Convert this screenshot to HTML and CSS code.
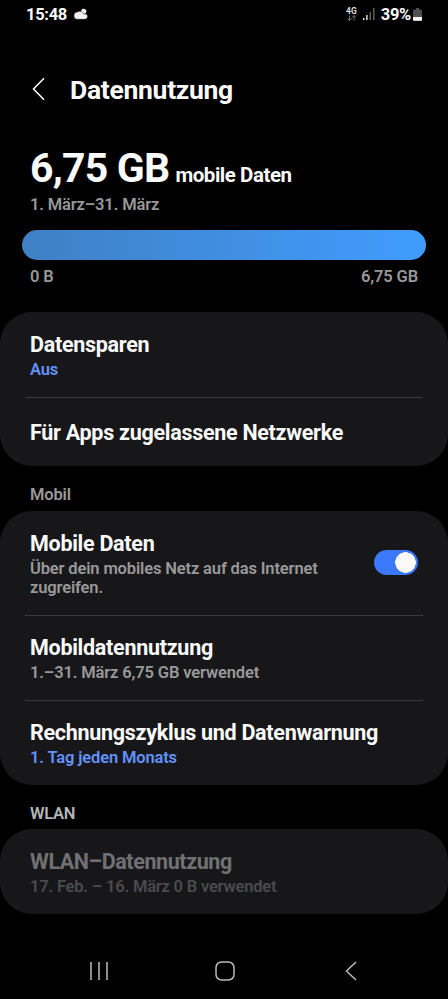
FILE: index.html
```html
<!DOCTYPE html>
<html lang="de">
<head>
<meta charset="utf-8">
<title>Datennutzung</title>
<link rel="stylesheet" href="styles.css">
</head>
<body>
<header class="status">
  <div class="status-left"><span class="t clock">15:48</span>
    <svg class="cloud" viewBox="0 0 14 12"><circle cx="9.700" cy="3.300" r="2.600" fill="#eee"/><path d="M3.700 11.300a3.600 3.600 0 0 1-.3-7.200 4.200 4.200 0 0 1 6.500 2.200 4 4 0 0 0 1.600-.5 2.800 2.800 0 0 1-.5 5.500z" fill="#f2f2f2" stroke="#000" stroke-width=".4"/></svg>
  </div>
  <div class="status-right">
    <svg class="net" viewBox="0 0 12 15"><text x="0" y="7" font-size="8.500" font-weight="700" fill="#ddd">4G</text><path d="M3.500 8.500v5M1.500 11.500l2 2 2-2M8 13.500v-5M6 10.500l2-2 2 2" stroke="#777" fill="none"/></svg>
    <svg class="signal" viewBox="0 0 12 12"><path d="M.7 10v2M3.900 7v5" stroke="#eee" stroke-width="1.400"/><path d="M7.300 4v8M10.800 0v12" stroke="#666" stroke-width="1.400"/></svg>
    <span class="t pct">39%</span>
    <svg class="battery" viewBox="0 0 9 13"><path d="M3 0h3v1.500h1.500A1.500 1.500 0 0 1 9 3v10H0V3a1.500 1.500 0 0 1 1.500-1.500H3z" fill="#505050"/><path d="M0 9h9v2.800a1 1 0 0 1-1 1H1a1 1 0 0 1-1-1z" fill="#f5f5f5"/></svg>
  </div>
</header>
<div class="titlebar">
  <svg class="back" viewBox="0 0 14 24"><path d="M13 1.200L2.500 12 13 22.800" fill="none" stroke="#fff" stroke-width="1.500"/></svg>
  <h1 class="t">Datennutzung</h1>
</div>
<section class="usage">
  <div class="amount"><span class="t big">6,75 GB</span><span class="t kind">mobile Daten</span></div>
  <div class="t period">1. März–31. März</div>
  <div class="bar"></div>
  <div class="scale"><span class="t">0 B</span><span class="t max">6,75 GB</span></div>
</section>
<main>
  <section class="card">
    <div class="row saver"><div class="t label">Datensparen</div><div class="t sub blue">Aus</div></div>
    <div class="row apps"><div class="t label">Für Apps zugelassene Netzwerke</div></div>
  </section>
  <h2>Mobil</h2>
  <section class="card">
    <div class="row mobile"><div><div class="t label">Mobile Daten</div><div class="t sub">Über dein mobiles Netz auf das Internet<br>zugreifen.</div></div><div class="switch"></div></div>
    <div class="row usage-row"><div class="t label">Mobildatennutzung</div><div class="t sub">1.–31. März 6,75 GB verwendet</div></div>
    <div class="row cycle"><div class="t label">Rechnungszyklus und Datenwarnung</div><div class="t sub blue">1. Tag jeden Monats</div></div>
  </section>
  <h2 class="light">WLAN</h2>
  <section class="card">
    <div class="row wlan"><div class="t label">WLAN–Datennutzung</div><div class="t sub">17. Feb. – 16. März 0 B verwendet</div></div>
  </section>
</main>
<nav>
  <svg viewBox="0 0 20 20"><path d="M2 1v18M10 1v18M18 1v18" stroke="#bbb" stroke-width="1.500"/></svg>
  <svg viewBox="0 0 20 20"><rect x="1" y="1" width="18" height="18" rx="5.500" fill="none" stroke="#bbb" stroke-width="1.500"/></svg>
  <svg viewBox="0 0 20 20"><path d="M15 1L5.500 10l9.500 9" fill="none" stroke="#bbb" stroke-width="1.500"/></svg>
</nav>
</body>
</html>
```
FILE: styles.css
```css
* { box-sizing: border-box; }
body { margin: 0; width: 448px; height: 999px; overflow: hidden; background: #000; color: #fafafa; font-family: Roboto, sans-serif; font-weight: 600; }
h1, h2 { margin: 0; font-weight: 600; }
.t { white-space: nowrap; }
.status { height: 30px; padding: 0 26px 2px; display: flex; justify-content: space-between; align-items: center; font-size: 16.500px; font-weight: 700; letter-spacing: -.3px; }
.status-left, .status-right { display: flex; align-items: center; }
.cloud { width: 14px; height: 12px; margin-left: 7px; }
.net { width: 12px; height: 15px; margin-right: 5px; letter-spacing: 0; }
.signal { width: 12px; height: 12px; margin-right: 6px; }
.battery { width: 9px; height: 13px; margin-left: 2px; }
.titlebar { height: 118px; padding: 0 31px; display: flex; align-items: center; }
.back { width: 14px; height: 24px; margin-right: 25px; }
h1 { font-size: 26.500px; font-weight: 700; letter-spacing: -.3px; }
.usage { height: 164px; }
.amount { height: 47px; padding-left: 30px; display: flex; align-items: baseline; gap: 6px; line-height: 41px; }
.big { font-size: 41px; font-weight: 700; letter-spacing: -.8px; }
.kind { font-size: 20.500px; font-weight: 700; letter-spacing: -.45px; }
.period { height: 35px; padding-left: 30px; line-height: 20px; font-size: 16.500px; letter-spacing: -.15px; color: #999; }
.bar { height: 30px; margin: 0 22px; border-radius: 15px; background: linear-gradient(90deg, #4080c4, #409cff); }
.scale { display: flex; justify-content: space-between; padding: 7px 30px; line-height: 20px; font-size: 16.500px; letter-spacing: -.15px; color: #999; }
.card { background: #171719; border-radius: 32px; overflow: hidden; }
.row { position: relative; padding: 19px 30px 0; }
.row + .row::before { content: ""; position: absolute; left: 25px; right: 25px; top: 0; height: 1px; background: #3a3a3c; }
.label { font-size: 21.500px; font-weight: 700; letter-spacing: -.28px; line-height: 28px; }
.sub { font-size: 16.500px; letter-spacing: -.14px; line-height: 22px; color: #999; }
.blue { color: #6293ff; }
.saver { height: 85px; }
.apps { height: 69px; padding-top: 22px; }
h2 { height: 45px; padding: 19px 30px 0; font-size: 16.500px; letter-spacing: -.15px; line-height: 20px; color: #999; }
h2.light { height: 44px; letter-spacing: -.3px; color: #b5b5b8; }
.mobile { height: 104px; display: flex; justify-content: space-between; }
.mobile .sub { line-height: 19px; padding-top: 1px; }
.switch { width: 44px; height: 25px; margin-top: 20px; border-radius: 13px; background: radial-gradient(circle at 31.5px 12.5px, #fafafa 10px, transparent 10.5px), #3b78fa; }
.usage-row { height: 85px; }
.cycle { height: 85px; }
.wlan { height: 85px; }
.wlan .label { color: #717173; letter-spacing: -.42px; }
.wlan .sub { color: #4b4b4e; letter-spacing: -.19px; }
nav { height: 85px; padding: 47px 87px 0 89px; display: flex; justify-content: space-between; }
nav svg { width: 20px; height: 20px; }
```
